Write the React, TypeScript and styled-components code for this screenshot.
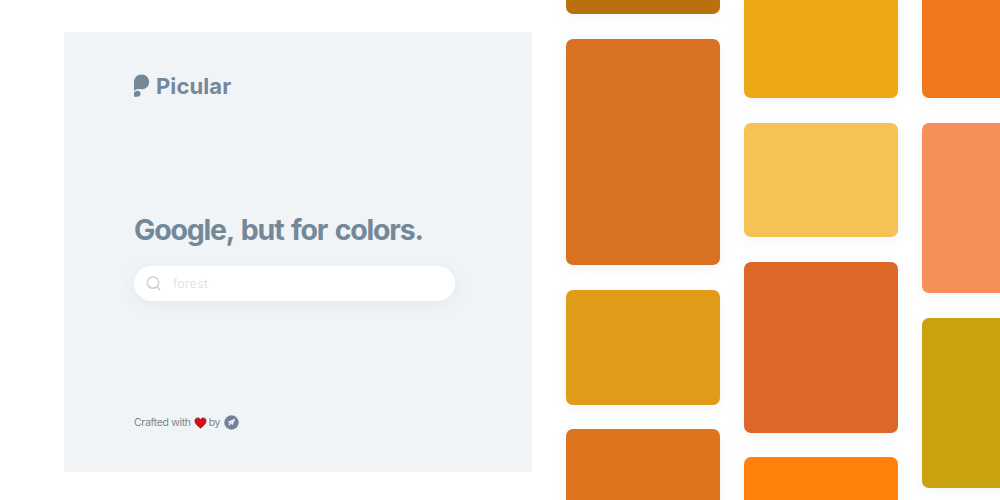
import React from 'react';
import styled, { createGlobalStyle } from 'styled-components'

interface Swatch {
  color: string
  height: number
}

const columns: Swatch[][] = [
  [
    { color: '#b9700d', height: 14.2 },
    { color: '#d87222', height: 226.2 },
    { color: '#e09b18', height: 115 },
    { color: '#de741d', height: 115 }
  ],
  [
    { color: '#eda915', height: 98 },
    { color: '#f5c355', height: 114.8 },
    { color: '#dc6729', height: 170.8 },
    { color: '#ff810a', height: 115 }
  ],
  [
    { color: '#f0771b', height: 98 },
    { color: '#f68f58', height: 170.6 },
    { color: '#caa20d', height: 170.6 }
  ]
]

const GlobalStyle = createGlobalStyle`
  * {
    box-sizing: border-box;
  }
  body {
    margin: 0;
    background: #fff;
    color: #758897;
    font-family: Inter, 'Liberation Sans', sans-serif;
    overflow: hidden;
  }`

const Page = styled.div`
  display: flex;
  width: 1000px;
  height: 500px;
  overflow: hidden;`

const Panel = styled.section`
  display: flex;
  flex-direction: column;
  flex: 0 0 468px;
  height: 440px;
  margin: 32px 34px 0 64px;
  padding: 42px 77px 42px 70px;
  background: #f0f4f7;`

const Brand = styled.div`
  display: flex;
  align-items: center;
  gap: 6px;
  height: 24px;`

const BrandName = styled.span`
  font-size: 22px;
  font-weight: 700;
  line-height: 24px;
  letter-spacing: 0.1px;`

const Title = styled.h1`
  margin: 113px 0 0;
  font-size: 28.5px;
  font-weight: 700;
  line-height: 38px;
  letter-spacing: -1.2px;
  word-spacing: 2px;
  white-space: nowrap;`

const Search = styled.label`
  display: flex;
  align-items: center;
  gap: 12px;
  width: 321px;
  height: 35px;
  margin-top: 17px;
  padding: 0 12px;
  border-radius: 18px;
  background: #fff;
  box-shadow: 0 3px 16px rgba(70, 90, 110, 0.08);`

const SearchInput = styled.input`
  width: 200px;
  padding: 0;
  border: 0;
  outline: 0;
  background: transparent;
  font-family: inherit;
  font-size: 12.5px;
  font-weight: 300;
  letter-spacing: 0.3px;
  &::placeholder {
    color: #dcdcdc;
    opacity: 1;
  }`

const Credits = styled.footer`
  display: flex;
  align-items: center;
  height: 16px;
  margin-top: auto;
  color: #7b8489;
  font-size: 10.5px;
  font-weight: 400;
  letter-spacing: -0.33px;
  white-space: nowrap;`

const Wall = styled.div`
  display: flex;
  flex: none;
  gap: 24px;`

const Column = styled.div`
  display: flex;
  flex-direction: column;
  flex: 0 0 154px;
  gap: 24.6px;`

const Tile = styled.div<{ $color: string; $height: number }>`
  flex: none;
  height: ${props => props.$height}px;
  border-radius: 7px;
  background: ${props => props.$color};
  box-shadow: 0 4px 14px rgba(60, 80, 110, 0.05);
  &:first-child {
    border-top-left-radius: 0;
    border-top-right-radius: 0;
  }`

const Heart = styled.svg`
  margin: 1px 2px 0 3px;`

const MakerBadge = styled.svg`
  margin-left: 4px;`

const Logo = () => (
  <svg width="16" height="24" viewBox="0 0 16 24" fill="currentColor">
    <path d="M0 17.3V8.2C0 3.7 3.3.6 7.6.6c4.2 0 7.5 3.1 7.5 7.3s-3.2 7.3-7.4 7.3c-1.2 0-2-.1-2.9-.1C2.6 15.1.8 15.8 0 17.3Z" />
    <path d="M0 22.7v-2.8c0-2 1.5-3.2 3.3-3.2s3.3 1.1 3.3 2.9c0 1.9-1.4 3.1-3.3 3.1Z" />
  </svg>
)

const SearchIcon = () => (
  <svg width="15" height="15" viewBox="0 0 15 15" fill="none" stroke="#cfd0d2" strokeWidth="1.5" strokeLinecap="round">
    <circle cx="7" cy="6.6" r="5.7" />
    <path d="m11 10.8 2.7 2.9" />
  </svg>
)

const HeartIcon = () => (
  <Heart width="13" height="12" viewBox="0 0 13 12">
    <path d="M6.5 11.2C4 9 .9 6.7.9 3.9.9 2.1 2.1.9 3.7.9c1.2 0 2.2.6 2.8 1.7C7.1 1.5 8.1.9 9.3.9c1.6 0 2.8 1.2 2.8 3 0 2.8-3.1 5.1-5.6 7.3Z" fill="#d90f18" stroke="#8f1118" strokeWidth=".7" />
  </Heart>
)

const MakerIcon = () => (
  <MakerBadge width="15" height="15" viewBox="0 0 15 15">
    <circle cx="7.5" cy="7.5" r="7.2" fill="#718495" />
    <path d="M11.4 3.6 8.6 9.9 7 8.8 5 10.8 4.6 9.8 5.6 8 3.6 7.1Z" fill="#f2f6f9" />
    <path d="m6.3 8.4 2-1.900" stroke="#718495" strokeWidth=".6" />
  </MakerBadge>
)

const App: React.FC = () => {
  return (
    <Page>
      <GlobalStyle />
      <Panel>
        <Brand>
          <Logo />
          <BrandName>Picular</BrandName>
        </Brand>
        <Title>Google, but for colors.</Title>
        <Search>
          <SearchIcon />
          <SearchInput placeholder="forest" />
        </Search>
        <Credits>
          Crafted with <HeartIcon /> by <MakerIcon />
        </Credits>
      </Panel>
      <Wall>
        {columns.map((column, i) => (
          <Column key={i}>
            {column.map(swatch => (
              <Tile key={swatch.color} $color={swatch.color} $height={swatch.height} />
            ))}
          </Column>
        ))}
      </Wall>
    </Page>
  );
};

export default App;
